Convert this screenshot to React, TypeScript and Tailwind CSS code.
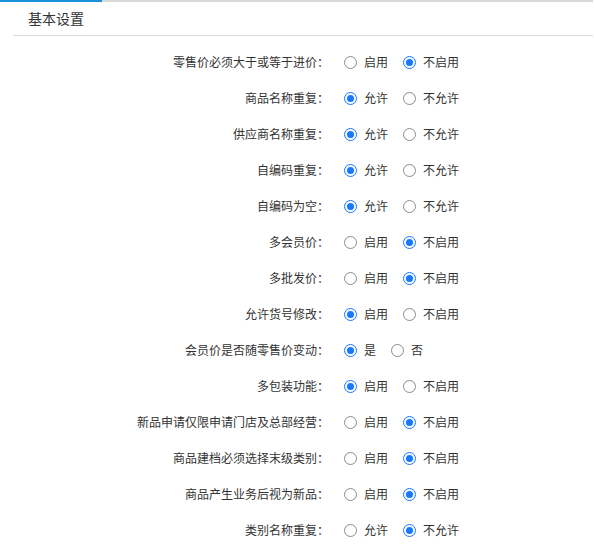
import React from 'react';

type Row = { label: string; options: string[]; selected: number };

const rows: Row[] = [
  { label: '零售价必须大于或等于进价：', options: ['启用', '不启用'], selected: 1 },
  { label: '商品名称重复：', options: ['允许', '不允许'], selected: 0 },
  { label: '供应商名称重复：', options: ['允许', '不允许'], selected: 0 },
  { label: '自编码重复：', options: ['允许', '不允许'], selected: 0 },
  { label: '自编码为空：', options: ['允许', '不允许'], selected: 0 },
  { label: '多会员价：', options: ['启用', '不启用'], selected: 1 },
  { label: '多批发价：', options: ['启用', '不启用'], selected: 1 },
  { label: '允许货号修改：', options: ['启用', '不启用'], selected: 0 },
  { label: '会员价是否随零售价变动：', options: ['是', '否'], selected: 0 },
  { label: '多包装功能：', options: ['启用', '不启用'], selected: 0 },
  { label: '新品申请仅限申请门店及总部经营：', options: ['启用', '不启用'], selected: 1 },
  { label: '商品建档必须选择末级类别：', options: ['启用', '不启用'], selected: 1 },
  { label: '商品产生业务后视为新品：', options: ['启用', '不启用'], selected: 1 },
  { label: '类别名称重复：', options: ['允许', '不允许'], selected: 1 },
];

const Radio: React.FC<{ checked: boolean }> = ({ checked }) =>
  checked ? (
    <span className="w-[13px] h-[13px] rounded-full border border-[#1677ff] flex items-center justify-center">
      <span className="w-[7px] h-[7px] rounded-full bg-[#1677ff]" />
    </span>
  ) : (
    <span className="w-[13px] h-[13px] rounded-full border border-[#8a8a8a] bg-white" />
  );

const App: React.FC = () => {
  return (
    <div className="w-[594px] h-[546px] bg-white overflow-hidden text-[#333] font-['Microsoft_YaHei','Noto_Sans_CJK_SC',sans-serif]">
      {/* 顶部标签条 */}
      <div className="flex h-[2px] w-[593px] bg-[#d9d9d9]">
        <div className="w-[102px] h-[2px] bg-[#1b8fdc]" />
      </div>

      <div className="ml-[13px] w-[580px] h-[34px] border-b border-[#dcdcdc] flex items-center pl-[15px] text-[14px] text-[#333]">
        基本设置
      </div>

      <div className="pt-[8px]">
        {rows.map((row, i) => (
          <div key={i} className="h-[36px] flex items-center text-[12px]">
            <div className="w-[329px] text-right shrink-0 whitespace-nowrap">{row.label}</div>
            <div className="flex items-center ml-[15px]">
              {row.options.map((opt, j) => (
                <label key={j} className="flex items-center mr-[15px]">
                  <Radio checked={row.selected === j} />
                  <span className="ml-[7px]">{opt}</span>
                </label>
              ))}
            </div>
          </div>
        ))}
      </div>
    </div>
  );
};

export default App;
